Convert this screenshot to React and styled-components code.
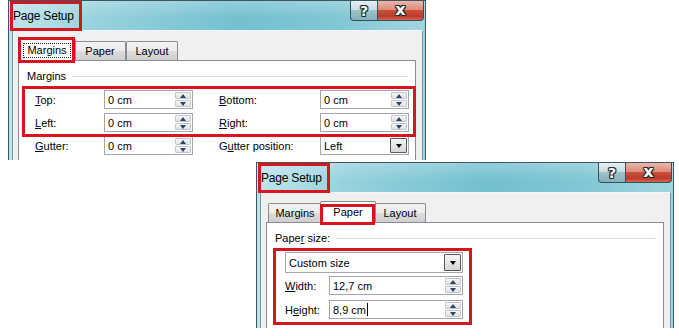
import React from 'react';
import styled, { createGlobalStyle } from 'styled-components';

const Global = createGlobalStyle`
  html, body { margin: 0; padding: 0; background: #fff; }
  body { font-family: "Liberation Sans", Arial, sans-serif; font-size: 11px; color: #000; }
  * { box-sizing: border-box; }
`;

const Canvas = styled.div`
  width: 679px;
  height: 336px;
  overflow: hidden;
  background: #fff;
  display: flex;
  flex-direction: column;
`;

const Window = styled.div`
  flex: none;
  width: 418px;
  height: ${p => p.$h}px;
  margin: ${p => p.$mt}px 0 0 ${p => p.$ml}px;
  display: flex;
  flex-direction: column;
  overflow: hidden;
  border: 1px solid #3d5560;
  border-bottom: none;
  background: linear-gradient(to right, #c0e4ec 0%, #96d1dd 22%, #74c0cf 55%, #80c6d4 78%, #a2d6e0 100%);
`;

const TitleBar = styled.div`
  flex: none;
  height: 29px;
  display: flex;
  align-items: flex-start;
  padding-left: 4px;
  padding-right: 1px;
  background: linear-gradient(to bottom, rgba(255,255,255,0.22), rgba(255,255,255,0) 60%);
`;

const TitleText = styled.div`
  position: relative;
  margin-top: 3px;
  width: 66px;
  height: 24px;
  line-height: 24px;
  font-size: 12px;
  letter-spacing: -0.2px;
  color: #000;
  white-space: nowrap;
`;

const Grow = styled.div`
  flex: 1;
`;

const CaptionButton = styled.div`
  flex: none;
  height: 20px;
  display: flex;
  align-items: center;
  justify-content: center;
  color: #fff;
  font-weight: bold;
  font-family: "DejaVu Sans", "Liberation Sans", sans-serif;
  line-height: 1;
  text-shadow: 1px 0 #2a2a2a, -1px 0 #2a2a2a, 0 1px #2a2a2a, 0 -1px #2a2a2a, 1px 1px #2a2a2a, -1px -1px #2a2a2a, 1px -1px #2a2a2a, -1px 1px #2a2a2a;
  border: 1px solid #35505b;
  border-top: none;
`;

const HelpButton = styled(CaptionButton)`
  width: 28px;
  font-size: 14px;
  border-bottom-left-radius: 4px;
  background: linear-gradient(to bottom, #e4eff2 0%, #c9dde3 45%, #9fc1ca 50%, #86b1bd 100%);
`;

const CloseButton = styled(CaptionButton)`
  width: 46px;
  font-size: 16px;
  padding-bottom: 2px;
  border-left: none;
  border-bottom-right-radius: 4px;
  background: linear-gradient(to bottom, #ebb8ac 0%, #de8b78 45%, #c9503a 50%, #bf3a29 80%, #d4654e 100%);
`;

const Body = styled.div`
  flex: 1;
  display: flex;
  flex-direction: column;
  margin: 0 2px 0 3px;
  padding: 8px 6px 0 5px;
  background: #f0f0f0;
  border: 1px solid #6e9aa5;
  border-top-color: #eef7f9;
  border-bottom: none;
`;

const TabStrip = styled.div`
  flex: none;
  position: relative;
  z-index: 1;
  height: 21px;
  display: flex;
  align-items: flex-end;
  padding-left: 2px;
`;

const Tab = styled.div`
  position: relative;
  flex: none;
  width: ${p => (p.$active ? p.$w + 4 : p.$w)}px;
  height: ${p => (p.$active ? 22 : 19)}px;
  margin: 0 ${p => (p.$active ? -2 : 0)}px ${p => (p.$active ? -1 : 0)}px;
  z-index: ${p => (p.$active ? 2 : 1)};
  display: flex;
  align-items: center;
  justify-content: center;
  padding-bottom: ${p => (p.$active ? 2 : 0)}px;
  border: 1px solid #898c95;
  border-bottom: none;
  border-radius: 2px 2px 0 0;
  background: ${p => (p.$active ? '#fff' : 'linear-gradient(to bottom, #f3f3f3 0%, #ebebeb 50%, #dddddd 50%, #cfcfcf 100%)')};
  font-size: 11px;
  color: #000;
`;

const FocusRing = styled.span`
  position: absolute;
  top: 3px;
  left: 4px;
  right: 4px;
  bottom: 3px;
  border: 1px dotted #222;
  pointer-events: none;
`;

const Callout = styled.span`
  position: absolute;
  top: ${p => p.$t}px;
  left: ${p => p.$l}px;
  right: ${p => p.$r}px;
  bottom: ${p => p.$b}px;
  border: 3px solid #d5161d;
  pointer-events: none;
  z-index: 5;
`;

const Panel = styled.div`
  flex: 1;
  display: flex;
  flex-direction: column;
  background: #fff;
  border: 1px solid #898c95;
  border-bottom: none;
  padding-top: 8px;
`;

const GroupHeader = styled.div`
  height: 14px;
  display: flex;
  align-items: center;
  padding: 0 7px 0 8px;
  white-space: nowrap;
`;

const GroupLine = styled.div`
  flex: 1;
  height: 1px;
  margin-left: 6px;
  background: #d5dfe5;
`;

const FieldStack = styled.div`
  position: relative;
  align-self: flex-start;
  display: flex;
  flex-direction: column;
  gap: ${p => p.$gap}px;
  margin: ${p => p.$mt || 0}px 0 0 ${p => p.$ml || 0}px;
`;

const Row = styled.div`
  height: 19px;
  display: flex;
  align-items: center;
  margin-top: ${p => p.$mt || 0}px;
`;

const Label = styled.div`
  flex: none;
  width: ${p => p.$w}px;
  margin-left: ${p => p.$ml || 0}px;
  white-space: nowrap;
`;

const U = styled.span`
  text-decoration: underline;
  text-underline-offset: 1px;
`;

const Box = styled.div`
  flex: none;
  width: ${p => p.$w}px;
  height: ${p => p.$h || 19}px;
  display: flex;
  align-items: stretch;
  padding: 1px;
  background: #fff;
  border: 1px solid #a3a6ad;
`;

const BoxText = styled.div`
  flex: 1;
  display: flex;
  align-items: center;
  padding-left: 2px;
  white-space: nowrap;
`;

const Caret = styled.span`
  display: inline-block;
  width: 1px;
  height: 13px;
  margin-left: 1px;
  background: #000;
`;

const Spinner = styled.div`
  flex: none;
  width: 16px;
  display: flex;
  flex-direction: column;
  gap: 1px;
`;

const SpinButton = styled.div`
  flex: 1;
  display: flex;
  align-items: center;
  justify-content: center;
  border: 1px solid #c2c7cf;
  border-radius: 1px;
  background: linear-gradient(to bottom, #f7f7f7, #e2e2e2);
`;

const Arrow = styled.span`
  width: 0;
  height: 0;
  border-left: 3.5px solid transparent;
  border-right: 3.5px solid transparent;
  ${p => (p.$down ? 'border-top' : 'border-bottom')}: 4px solid ${p => p.$c || '#2c4472'};
`;

const DropButton = styled.div`
  flex: none;
  width: 17px;
  display: flex;
  align-items: center;
  justify-content: center;
  border: 1px solid #5a5a5a;
  border-radius: 1px;
  background: linear-gradient(to bottom, #f6f6f6, #d6d6d6);
`;

const Spin = () => (
  <Spinner>
    <SpinButton><Arrow /></SpinButton>
    <SpinButton><Arrow $down /></SpinButton>
  </Spinner>
);

const NumberBox = ({ w, children }) => (
  <Box $w={w}>
    <BoxText>{children}</BoxText>
    <Spin />
  </Box>
);

const SelectBox = ({ w, h, children }) => (
  <Box $w={w} $h={h}>
    <BoxText>{children}</BoxText>
    <DropButton><Arrow $down $c="#000" /></DropButton>
  </Box>
);

const Dialog = ({ h, mt, ml, tabs, active, focus, tabCallout, children }) => (
  <Window $h={h} $mt={mt} $ml={ml}>
    <TitleBar>
      <TitleText>
        Page Setup
        <Callout $t={-3} $l={-3} $r={-3} $b={-3} />
      </TitleText>
      <Grow />
      <HelpButton>?</HelpButton>
      <CloseButton>x</CloseButton>
    </TitleBar>
    <Body>
      <TabStrip>
        {tabs.map(t => (
          <Tab key={t.name} $w={t.w} $active={t.name === active}>
            {t.name}
            {focus && t.name === active && <FocusRing />}
            {t.name === active && <Callout {...tabCallout} />}
          </Tab>
        ))}
      </TabStrip>
      <Panel>{children}</Panel>
    </Body>
  </Window>
);

const TABS = [
  { name: 'Margins', w: 54 },
  { name: 'Paper', w: 52 },
  { name: 'Layout', w: 52 },
];

export default function App() {
  return (
    <>
      <Global />
      <Canvas>
        <Dialog
          h={160}
          mt={0}
          ml={8}
          tabs={TABS}
          active="Margins"
          focus
          tabCallout={{ $t: -3, $l: -1, $r: 0, $b: -2 }}
        >
          <GroupHeader>
            Margins
            <GroupLine />
          </GroupHeader>
          <FieldStack $gap={4} $mt={7} $ml={16}>
            <FieldStack $gap={4}>
              <Row>
                <Label $w={69}><U>T</U>op:</Label>
                <NumberBox w={89}>0 cm</NumberBox>
                <Label $w={101} $ml={26}><U>B</U>ottom:</Label>
                <NumberBox w={89}>0 cm</NumberBox>
              </Row>
              <Row>
                <Label $w={69}><U>L</U>eft:</Label>
                <NumberBox w={89}>0 cm</NumberBox>
                <Label $w={101} $ml={26}><U>R</U>ight:</Label>
                <NumberBox w={89}>0 cm</NumberBox>
              </Row>
              <Callout $t={-4} $l={-13} $r={-7} $b={-5} />
            </FieldStack>
            <Row>
              <Label $w={69}><U>G</U>utter:</Label>
              <NumberBox w={89}>0 cm</NumberBox>
              <Label $w={101} $ml={26}>G<U>u</U>tter position:</Label>
              <SelectBox w={89}>Left</SelectBox>
            </Row>
          </FieldStack>
        </Dialog>

        <Dialog
          h={166}
          mt={2}
          ml={256}
          tabs={TABS}
          active="Paper"
          tabCallout={{ $t: 2, $l: -1, $r: 0, $b: -2 }}
        >
          <GroupHeader>
            Pape<U>r</U>&nbsp;size:
            <GroupLine />
          </GroupHeader>
          <FieldStack $gap={0} $mt={7} $ml={18}>
            <SelectBox w={178} h={21}>Custom size</SelectBox>
            <Row $mt={3}>
              <Label $w={44}><U>W</U>idth:</Label>
              <NumberBox w={134}>12,7 cm</NumberBox>
            </Row>
            <Row $mt={5}>
              <Label $w={44}>H<U>e</U>ight:</Label>
              <NumberBox w={134}>8,9 cm<Caret /></NumberBox>
            </Row>
            <Callout $t={-4} $l={-12} $r={-9} $b={-6} />
          </FieldStack>
        </Dialog>
      </Canvas>
    </>
  );
}
